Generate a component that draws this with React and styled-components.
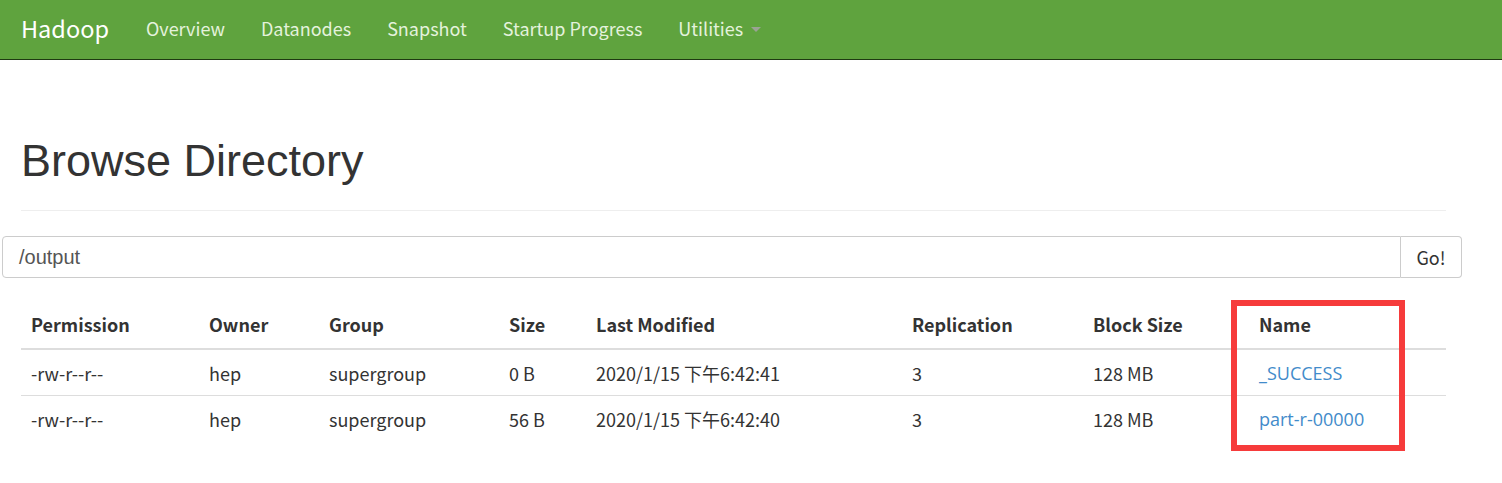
import { createGlobalStyle, styled } from "styled-components";

const GlobalStyle = createGlobalStyle`
  html, body {
    margin: 0;
    padding: 0;
    background: #fff;
  }
  body {
    font-family: "Liberation Sans", Arial, sans-serif;
    color: #333;
  }
`;

const YAHEI = `"Noto Sans CJK SC", "Noto Sans", sans-serif`;

const Navbar = styled.nav`
  height: 60px;
  box-sizing: border-box;
  background: #5fa33e;
  border-bottom: 1px solid #1f3a12;
  display: flex;
  align-items: center;
  padding: 0 0 3px 21px;
  font-family: ${YAHEI};
`;

const Brand = styled.a`
  font-size: 23.5px;
  color: #fff;
  margin-right: 37px;
`;

const NavLink = styled.a`
  font-size: 18px;
  color: #e4f2dc;
  margin-right: 36px;
  display: flex;
  align-items: center;
`;

const Caret = styled.span`
  display: inline-block;
  margin-left: 8px;
  margin-top: 3px;
  border-top: 5px solid #9aa394;
  border-left: 5px solid transparent;
  border-right: 5px solid transparent;
`;

const Container = styled.div`
  padding: 0 56px 0 21px;
`;

const Title = styled.h1`
  margin: 0;
  padding-top: 73px;
  font-size: 45px;
  font-weight: 400;
  line-height: 56px;
  color: #333;
  padding-bottom: 21px;
  border-bottom: 1px solid #eee;
`;

const SearchWrap = styled.div`
  padding: 25px 40px 0 2px;
`;

const InputGroup = styled.div`
  display: flex;
  height: 42px;
`;

const PathInput = styled.div`
  flex: 1;
  border: 1px solid #ccc;
  border-radius: 4px 0 0 4px;
  display: flex;
  align-items: center;
  padding-left: 16px;
  font-size: 20px;
  color: #555;
`;

const GoButton = styled.div`
  width: 60px;
  border: 1px solid #ccc;
  border-left: none;
  border-radius: 0 4px 4px 0;
  display: flex;
  align-items: center;
  justify-content: center;
  font-family: ${YAHEI};
  font-size: 18px;
  color: #333;
`;

const Table = styled.table`
  width: 100%;
  table-layout: fixed;
  border-collapse: collapse;
  margin-top: 24px;
  font-family: ${YAHEI};
  font-size: 18px;
  line-height: 24px;
  color: #333;
`;

const Th = styled.th`
  box-sizing: border-box;
  text-align: left;
  font-weight: 700;
  padding: 10px 10px 12px;
  border-bottom: 2px solid #ddd;
  width: ${(p) => p.$w}px;
`;

const Td = styled.td`
  padding: 10px 10px 10px;
  border-top: ${(p) => (p.$first ? "none" : "1px solid #ddd")};
  white-space: nowrap;
`;

const FileLink = styled.a`
  font-family: "Open Sans", "Liberation Sans", sans-serif;
  color: #428bca;
  font-size: 18px;
  text-decoration: none;
`;

const Highlight = styled.div`
  position: absolute;
  left: 1231px;
  top: 300px;
  width: 162px;
  height: 139px;
  border: 6px solid #f63b3b;
  pointer-events: none;
`;

const Page = styled.div`
  position: relative;
  width: 1502px;
  height: 483px;
  overflow: hidden;
`;

const columns = [
  ["Permission", 178],
  ["Owner", 120],
  ["Group", 180],
  ["Size", 87],
  ["Last Modified", 316],
  ["Replication", 181],
  ["Block Size", 166],
  ["Name", 197],
];

const rows = [
  ["-rw-r--r--", "hep", "supergroup", "0 B", "2020/1/15 下午6:42:41", "3", "128 MB", "_SUCCESS"],
  ["-rw-r--r--", "hep", "supergroup", "56 B", "2020/1/15 下午6:42:40", "3", "128 MB", "part-r-00000"],
];

export default function App() {
  return (
    <Page>
      <GlobalStyle />
      <Navbar>
        <Brand>Hadoop</Brand>
        <NavLink>Overview</NavLink>
        <NavLink>Datanodes</NavLink>
        <NavLink>Snapshot</NavLink>
        <NavLink>Startup Progress</NavLink>
        <NavLink>
          Utilities
          <Caret />
        </NavLink>
      </Navbar>
      <Container>
        <Title>Browse Directory</Title>
      </Container>
      <SearchWrap>
        <InputGroup>
          <PathInput>/output</PathInput>
          <GoButton>Go!</GoButton>
        </InputGroup>
      </SearchWrap>
      <Container>
        <Table>
          <thead>
            <tr>
              {columns.map(([label, w]) => (
                <Th key={label} $w={w}>
                  {label}
                </Th>
              ))}
            </tr>
          </thead>
          <tbody>
            {rows.map((row, i) => (
              <tr key={i}>
                {row.map((cell, j) => (
                  <Td key={j} $first={i === 0}>
                    {j === 7 ? <FileLink>{cell}</FileLink> : cell}
                  </Td>
                ))}
              </tr>
            ))}
          </tbody>
        </Table>
      </Container>
      <Highlight />
    </Page>
  );
}
